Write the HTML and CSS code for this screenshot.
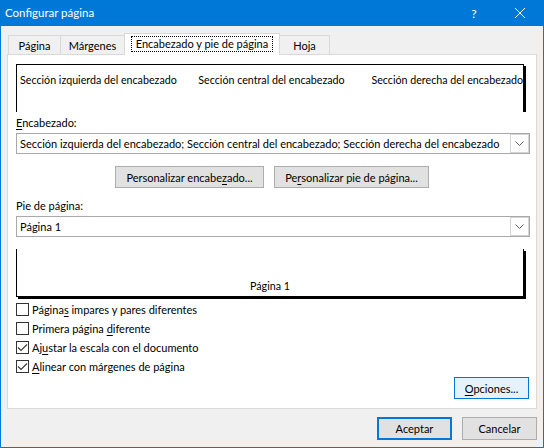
FILE: index.html
```html
<!DOCTYPE html>
<html lang="es">
<head>
<meta charset="utf-8">
<title>Configurar página</title>
<link rel="stylesheet" href="styles.css">
</head>
<body>
<div class="window">
  <div class="titlebar">
    <span class="title">Configurar página</span>
    <span class="capbtn help">?</span>
    <span class="capbtn close"><svg width="10" height="10" viewBox="0 0 10 10"><path d="M0 0L10 10M10 0L0 10" stroke="#fff" stroke-width="1"/></svg></span>
  </div>
  <div class="client">
    <div class="tabstrip">
      <div class="tab t1">Página</div>
      <div class="tab t2">Márgenes</div>
      <div class="tab t3 selected"><span class="focus">Encabezado y pie de página</span></div>
      <div class="tab t4">Hoja</div>
    </div>
    <div class="panel">
      <div class="preview header-preview">
        <span class="sec-left">Sección izquierda del encabezado</span>
        <span class="sec-center">Sección central del encabezado</span>
        <span class="sec-right">Sección derecha del encabezado</span>
      </div>
      <div class="label label-header"><u>E</u>ncabezado:</div>
      <div class="combo">
        <span class="combo-text">Sección izquierda del encabezado; Sección central del encabezado; Sección derecha del encabezado</span>
        <span class="combo-btn"><svg width="9" height="5" viewBox="0 0 9 5"><path d="M0.5 0.5L4.5 4.5L8.5 0.5" fill="none" stroke="#5f5f5f" stroke-width="1"/></svg></span>
      </div>
      <div class="btnrow">
        <button class="btn btn-enc"><span>Personalizar encabe<u>z</u>ado...</span></button>
        <button class="btn btn-pie"><span>Pe<u>r</u>sonalizar pie de página...</span></button>
      </div>
      <div class="label label-footer">Pie de página:</div>
      <div class="combo">
        <span class="combo-text">Página 1</span>
        <span class="combo-btn"><svg width="9" height="5" viewBox="0 0 9 5"><path d="M0.5 0.5L4.5 4.5L8.5 0.5" fill="none" stroke="#5f5f5f" stroke-width="1"/></svg></span>
      </div>
      <div class="preview footer-preview"><span>Página 1</span></div>
      <div class="checks">
        <label class="check"><span class="box"></span><span class="ctext">Página<u>s</u> impares y pares diferentes</span></label>
        <label class="check"><span class="box"></span><span class="ctext">Primera página <u>d</u>iferente</span></label>
        <label class="check"><span class="box"><svg width="11" height="11" viewBox="0 0 11 11"><path d="M1 5.5L4 8.5L10 2.5" fill="none" stroke="#3c3c3c" stroke-width="1.2"/></svg></span><span class="ctext">Aj<u>u</u>star la escala con el documento</span></label>
        <label class="check"><span class="box"><svg width="11" height="11" viewBox="0 0 11 11"><path d="M1 5.5L4 8.5L10 2.5" fill="none" stroke="#3c3c3c" stroke-width="1.2"/></svg></span><span class="ctext"><u>A</u>linear con márgenes de página</span></label>
      </div>
      <div class="optrow">
        <button class="btn btn-opt"><span><u>O</u>pciones...</span></button>
      </div>
    </div>
    <div class="dialog-buttons">
      <button class="btn btn-default"><span>Aceptar</span></button>
      <button class="btn"><span>Cancelar</span></button>
    </div>
  </div>
</div>
</body>
</html>
```
FILE: styles.css
```css
html, body {
  margin: 0;
  padding: 0;
  background: #f0f0f0;
}
body {
  font-family: Lato, "Noto Sans", sans-serif;
  font-size: 11px;
  color: #000;
  white-space: nowrap;
}
u {
  text-decoration-thickness: 1px;
  text-underline-offset: 2px;
}
.window {
  width: 544px;
  height: 448px;
  box-sizing: border-box;
  border: 1px solid #0078d7;
  border-top: none;
  background: #f0f0f0;
  display: flex;
  flex-direction: column;
}
.titlebar {
  height: 26px;
  background: #0078d7;
  color: #fff;
  display: flex;
  align-items: center;
  flex: none;
}
.title {
  flex: 1;
  padding-left: 4px;
  font-size: 11.5px;
  line-height: 16px;
}
.capbtn {
  width: 46px;
  height: 26px;
  display: flex;
  align-items: center;
  justify-content: center;
}
.help {
  font-size: 12px;
}
.client {
  padding: 7px 6px 0 6px;
  flex: 1;
}
.tabstrip {
  display: flex;
  height: 21px;
  padding-left: 1px;
}
.tab {
  box-sizing: border-box;
  height: 19px;
  margin-top: 2px;
  border: 1px solid #d9d9d9;
  border-bottom: none;
  background: #f0f0f0;
  display: flex;
  align-items: center;
  justify-content: center;
  line-height: 14px;
  padding-top: 1px;
}
.t1 { width: 53px; }
.t2 { width: 65px; margin-left: -1px; }
.t3 { width: 156px; margin-left: -1px; }
.t4 { width: 51px; margin-left: -1px; }
.tab.selected {
  height: 22px;
  margin-top: 0;
  background: #fff;
  position: relative;
  z-index: 1;
  align-items: flex-start;
  padding-top: 3px;
}
.focus {
  display: block;
  height: 14px;
  line-height: 14px;
  padding: 0 4px;
  outline: 1px dotted #000;
  outline-offset: 0;
}
.panel {
  box-sizing: border-box;
  height: 355px;
  border: 1px solid #d9d9d9;
  background: #fff;
  padding: 0 8px;
}
.preview {
  box-sizing: border-box;
  width: 508px;
  height: 48px;
  border: 1px solid #000;
  box-shadow: 2px 2px 0 #000;
  font-size: 10.7px;
  line-height: 14px;
}
.header-preview {
  margin-top: 9px;
  border-bottom: none;
  clip-path: inset(0 -3px 0 0);
  display: grid;
  grid-template-columns: 1fr auto 1fr;
  padding: 8px 0 0 3px;
}
.sec-left { justify-self: start; }
.sec-center { justify-self: center; }
.sec-right { justify-self: end; }
.footer-preview {
  margin-top: 12px;
  border-top: none;
  display: flex;
  justify-content: center;
  align-items: flex-end;
  padding-bottom: 3px;
}
.label {
  line-height: 15px;
  height: 15px;
}
.label-header {
  margin-top: 3px;
  margin-bottom: 3px;
}
.label-footer {
  margin-top: 10px;
  margin-bottom: 3px;
}
.combo {
  box-sizing: border-box;
  width: 514px;
  height: 21px;
  border: 1px solid #a9a9a9;
  background: #fff;
  display: flex;
  align-items: center;
  padding-left: 3px;
}
.combo-text {
  flex: 1;
  line-height: 15px;
  overflow: hidden;
}
.combo-btn {
  box-sizing: border-box;
  width: 19px;
  height: 19px;
  border: 1px solid #d4d4d4;
  display: flex;
  align-items: center;
  justify-content: center;
}
.btnrow {
  margin-top: 12px;
  display: flex;
  justify-content: center;
  gap: 10px;
}
.btn {
  box-sizing: border-box;
  height: 22px;
  border: 1px solid #adadad;
  background: #e1e1e1;
  font-family: inherit;
  font-size: 11px;
  color: #000;
  padding: 0;
  margin: 0;
  line-height: 15px;
  display: flex;
  align-items: center;
  justify-content: center;
  white-space: nowrap;
}
.btn-enc { width: 149px; }
.btn-pie { width: 155px; }
.checks {
  margin-top: 3px;
  display: flex;
  flex-direction: column;
}
.check {
  height: 19px;
  display: flex;
  align-items: center;
  line-height: 15px;
}
.box {
  box-sizing: border-box;
  width: 13px;
  height: 13px;
  border: 1px solid #333;
  background: #fff;
  margin-right: 3px;
  display: flex;
}
.optrow {
  margin-top: 1px;
  display: flex;
  justify-content: flex-end;
  margin-right: -1px;
}
.btn-opt {
  width: 75px;
  background: #e5f1fb;
  border-color: #0078d7;
}
.dialog-buttons {
  margin-top: 8px;
  display: flex;
  justify-content: flex-end;
  gap: 10px;
}
.dialog-buttons .btn {
  width: 75px;
  height: 23px;
}
.btn-default {
  border: 2px solid #0078d7;
}
```
